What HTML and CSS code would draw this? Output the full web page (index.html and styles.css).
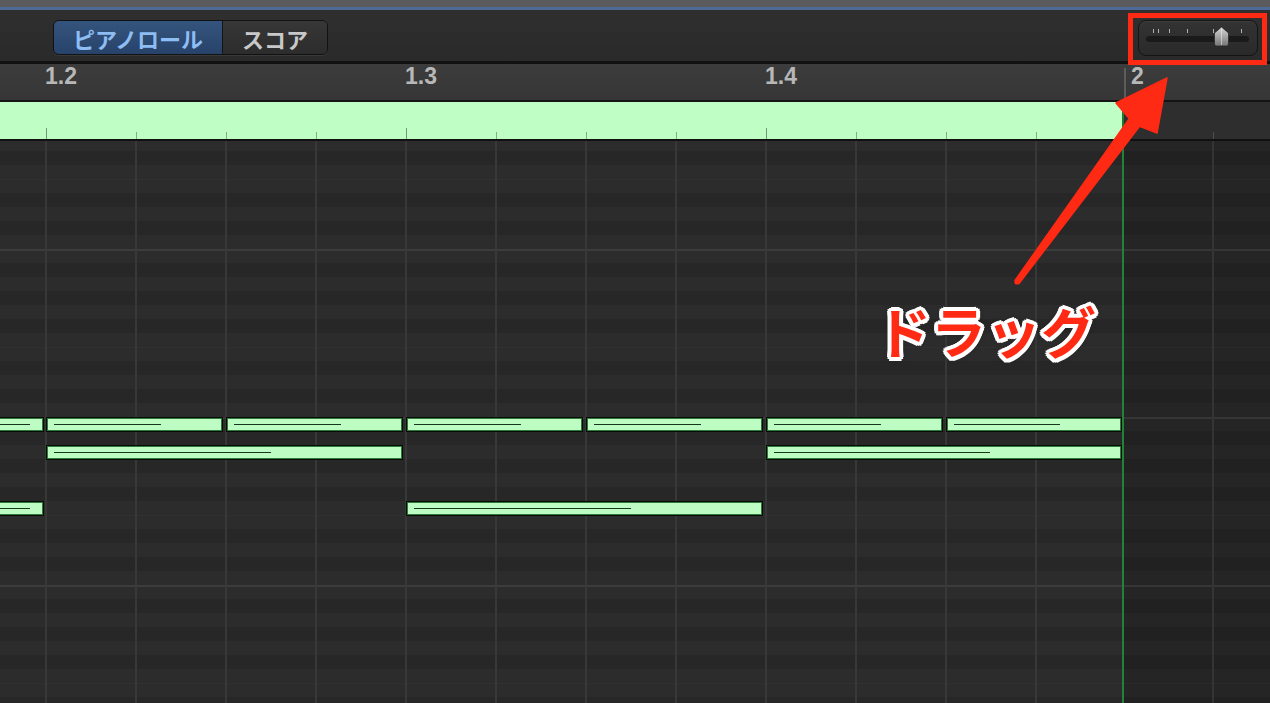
FILE: index.html
```html
<!DOCTYPE html>
<html lang="ja">
<head>
    <meta charset="UTF-8">
    <meta name="viewport" content="width=device-width, initial-scale=1.0">
    <title>ピアノロール</title>
    <link rel="stylesheet" href="styles.css">
</head>
<body>
    <div class="window">
        <div class="titlebar"></div>
        <div class="toolbar">
            <div class="seg">
                <span class="seg-item active">ピアノロール</span>
                <span class="seg-item">スコア</span>
            </div>
            <div class="zoom-slider">
                <svg width="120" height="36" viewBox="0 0 120 36">
                    <defs>
                        <linearGradient id="thumb" x1="0" y1="0" x2="0" y2="1">
                            <stop offset="0" stop-color="#d6d6d6"/>
                            <stop offset="1" stop-color="#767676"/>
                        </linearGradient>
                    </defs>
                    <rect x="8" y="16" width="103" height="6" rx="3" fill="#1a1a1a"/>
                    <g fill="#b0b0b0">
                        <rect x="15" y="9" width="1" height="4"/>
                        <rect x="20" y="9" width="1" height="4"/>
                        <rect x="31" y="9" width="1" height="4"/>
                        <rect x="49" y="9" width="1" height="4"/>
                        <rect x="75" y="9" width="1" height="4"/>
                        <rect x="103" y="9" width="1" height="4"/>
                    </g>
                    <path d="M76.5 13 L83.5 7 L90.5 13 L90.5 24 Q90.5 26 88.5 26 L78.5 26 Q76.5 26 76.5 24 Z" fill="url(#thumb)" stroke="#2a2a2a" stroke-width="0.8"/>
                    <line x1="83.5" y1="8.5" x2="83.5" y2="25" stroke="#f0f0f0" stroke-opacity="0.55" stroke-width="1"/>
                </svg>
            </div>
        </div>
        <div class="ruler">
            <span class="mark">1.2</span>
            <span class="mark">1.3</span>
            <span class="mark">1.4</span>
            <span class="mark bar">2</span>
        </div>
        <div class="regionbar">
            <div class="region"></div>
            <div class="region-out"></div>
        </div>
        <div class="grid">
            <div class="lane">
                <!-- 上段 -->
                <div class="note" style="left:-10px;top:276px;width:54px"></div>
                <div class="note" style="left:46px;top:276px;width:177px"></div>
                <div class="note" style="left:226px;top:276px;width:177px"></div>
                <div class="note" style="left:406px;top:276px;width:177px"></div>
                <div class="note" style="left:586px;top:276px;width:177px"></div>
                <div class="note" style="left:766px;top:276px;width:177px"></div>
                <div class="note" style="left:946px;top:276px;width:176px"></div>
                <!-- 中段 -->
                <div class="note" style="left:46px;top:304px;width:357px"></div>
                <div class="note" style="left:766px;top:304px;width:356px"></div>
                <!-- 下段 -->
                <div class="note" style="left:-10px;top:360px;width:54px"></div>
                <div class="note" style="left:406px;top:360px;width:357px"></div>
            </div>
            <div class="outside"></div>
        </div>

        <div class="callout-box"></div>
        <svg class="callout-arrow" width="1270" height="703" viewBox="0 0 1270 703">
            <polygon points="1167,78 1157,133 1139.6,126.3 1019,283.5 1015,280.5 1129.2,118.6 1116,103" fill="#ff2a14" stroke="#ff2a14" stroke-width="1.5" stroke-linejoin="round"/>
            <circle cx="1017" cy="282" r="2.6" fill="#ff2a14"/>
        </svg>
        <div class="callout-text">ドラッグ</div>
    </div>
</body>
</html>
```

FILE: styles.css
```css
body {
    margin: 0;
    padding: 0;
    background-color: #2b2b2b;
    font-family: "Liberation Sans", Arial, sans-serif;
    overflow: hidden;
}
.window {
    position: relative;
    width: 1270px;
    height: 703px;
    display: flex;
    flex-direction: column;
    overflow: hidden;
}
.titlebar {
    height: 7px;
    background-color: #5b5b5d;
    border-bottom: 3px solid #4d6a98;
    flex: none;
}
.toolbar {
    height: 54px;
    flex: none;
    display: flex;
    justify-content: space-between;
    align-items: flex-start;
    padding: 10px 12px 0 53px;
    box-sizing: border-box;
    background: linear-gradient(#2f2f2f, #2a2a2a);
    border-bottom: 3px solid #111;
}
.seg {
    display: flex;
    height: 35px;
    border: 1px solid #121212;
    border-radius: 6px;
    overflow: hidden;
    box-sizing: border-box;
    box-shadow: 0 1px 0 rgba(255, 255, 255, 0.07);
    font-family: "Noto Sans CJK JP", sans-serif;
    font-size: 22px;
    font-weight: bold;
}
.seg-item {
    display: flex;
    align-items: center;
    justify-content: center;
    background: linear-gradient(#373737, #2c2c2c);
    color: #c8c8c8;
    width: 104px;
}
.seg-item.active {
    width: 168px;
    background: linear-gradient(#35547d, #27436a);
    color: #8dbdf3;
    border-right: 1px solid #141414;
}
.zoom-slider {
    width: 120px;
    height: 36px;
    box-sizing: border-box;
    border: 1px solid #141414;
    border-radius: 8px;
    background: linear-gradient(#333, #2a2a2a);
    box-shadow: inset 0 1px 0 rgba(255, 255, 255, 0.06);
}
.zoom-slider svg {
    display: block;
    margin: -1px;
}
.ruler {
    height: 38px;
    flex: none;
    display: flex;
    padding-left: 45px;
    background: linear-gradient(#3c3c3c, #363636);
    border-bottom: 2px solid #141414;
    color: #b7b7b7;
    font-size: 23px;
    line-height: 23px;
    font-weight: bold;
    padding-top: 1px;
    box-sizing: border-box;
}
.mark {
    width: 360px;
    flex: none;
}
.mark.bar {
    width: auto;
    margin-left: -1px;
    padding-left: 7px;
    background: linear-gradient(#5c5c5c, #5c5c5c) no-repeat 0 3px / 2px 32px;
}
.regionbar {
    height: 37px;
    flex: none;
    display: flex;
    border-bottom: 2px solid #111;
}
.region {
    width: 1122px;
    flex: none;
    background-color: #bfffc6;
    background-image:
        linear-gradient(90deg, #6f9a74 0 1px, transparent 1px),
        linear-gradient(90deg, #86ad8a 0 1px, transparent 1px);
    background-size: 360px 11px, 90px 7px;
    background-position: 46px bottom, 46px bottom;
    background-repeat: repeat-x;
}
.region-out {
    flex: 1;
    border-left: 2px solid #1f7a30;
    background-color: #2e2e2e;
    background-image: linear-gradient(90deg, transparent 89px, #4e4e4e 89px 90px);
    background-size: 90px 7px;
    background-position: 0 bottom;
    background-repeat: repeat-x;
}
.grid {
    flex: 1;
    display: flex;
}
.lane {
    position: relative;
    width: 1122px;
    flex: none;
    border-right: 2px solid #23823a;
    background-image:
        linear-gradient(90deg, #383838 0 2px, transparent 2px),
        linear-gradient(180deg, #3c3c3c 0 2px, #2c2c2c 2px 14px, #272727 14px 28px, #2c2c2c 28px 42px, #272727 42px 56px, #2c2c2c 56px 70px, #272727 70px 84px, #2c2c2c 84px 98px, #303030 98px 99px, #2c2c2c 99px 112px, #272727 112px 126px, #2c2c2c 126px 140px, #272727 140px 154px, #2c2c2c 154px 168px);
    background-size: 90px 100%, 100% 168px;
    background-position: 45px 0, 0 108px;
}
.outside {
    flex: 1;
    background-image:
        linear-gradient(90deg, transparent 88px, #343434 88px 90px),
        linear-gradient(180deg, #363636 0 2px, #252525 2px 14px, #212121 14px 28px, #252525 28px 42px, #212121 42px 56px, #252525 56px 70px, #212121 70px 84px, #252525 84px 98px, #2a2a2a 98px 99px, #252525 99px 112px, #212121 112px 126px, #252525 126px 140px, #212121 140px 154px, #252525 154px 168px);
    background-size: 90px 100%, 100% 168px;
    background-position: 0 0, 0 108px;
}
.note {
    position: absolute;
    height: 15px;
    box-sizing: border-box;
    background-color: #bdfdc4;
    border: 1.5px solid #050d06;
    box-shadow: inset 0 0 0 1px #2f7a3b;
}
.note::after {
    content: "";
    position: absolute;
    left: 7px;
    top: 5.5px;
    width: 61%;
    height: 1.5px;
    background-color: #17361b;
}
.callout-box {
    position: absolute;
    left: 1128px;
    top: 13px;
    width: 139px;
    height: 52px;
    box-sizing: border-box;
    border: 5px solid #ff2a14;
}
.callout-arrow {
    position: absolute;
    left: 0;
    top: 0;
}
.callout-text {
    position: absolute;
    left: 876px;
    top: 302px;
    font-family: "Noto Sans CJK JP", sans-serif;
    font-weight: bold;
    font-size: 55px;
    line-height: 1;
    color: #ff2a14;
    text-shadow:
        4px 0 0 #fff, 3.5px 2px 0 #fff, 2px 3.5px 0 #fff, 0 4px 0 #fff,
        -2px 3.5px 0 #fff, -3.5px 2px 0 #fff, -4px 0 0 #fff, -3.5px -2px 0 #fff,
        -2px -3.5px 0 #fff, 0 -4px 0 #fff, 2px -3.5px 0 #fff, 3.5px -2px 0 #fff,
        0 0 6px rgba(0, 0, 0, 0.7);
}
```
